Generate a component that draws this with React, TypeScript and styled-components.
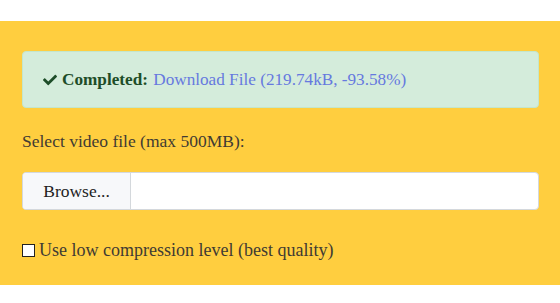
import React from "react";
import styled, { createGlobalStyle } from "styled-components";
import { FaCheck } from "react-icons/fa";

const Global = createGlobalStyle`
  html, body { margin: 0; padding: 0; background: #fff; }
  body { font-family: "Liberation Serif", "DejaVu Serif", serif; font-size: 17.5px; color: #3f3b33; }
  * { box-sizing: border-box; }
`;

const Header = styled.header`
  height: 21px;
  background: #ffffff;
`;

const Main = styled.main`
  background: #ffce3f;
  height: 264px;
  overflow: hidden;
  padding: 30px 21px 0 22px;
`;

const Alert = styled.div`
  background: #d4ecdb;
  border: 1px solid #c3e6cb;
  border-radius: 4px;
  padding: 16px 20px;
  line-height: 23px;
  font-size: 17.2px;
  color: #155724;
  display: flex;
  align-items: center;
  gap: 5px;
  margin-bottom: 20px;
`;

const Strong = styled.strong`
  font-weight: bold;
  color: #1d4d28;
`;

const Link = styled.a`
  color: #6679df;
  text-decoration: none;
  margin-left: 1px;
`;

const Label = styled.div`
  line-height: 26px;
  margin-bottom: 18px;
`;

const InputGroup = styled.div`
  display: flex;
  height: 38px;
  border: 1px solid #d4d8dc;
  border-radius: 4px;
  background: #fff;
  overflow: hidden;
`;

const Browse = styled.div`
  width: 108px;
  background: #f7f8fa;
  border-right: 1px solid #d4d8dc;
  color: #222;
  display: flex;
  align-items: center;
  justify-content: center;
`;

const Field = styled.div`
  flex: 1;
`;

const CheckRow = styled.label`
  display: flex;
  align-items: center;
  gap: 4px;
  font-size: 18px;
  line-height: 26px;
  margin-top: 27px;
`;

const Box = styled.span`
  width: 13px;
  height: 13px;
  border: 1px solid #222;
  background: #fff;
  display: inline-block;
  flex: none;
`;

const NextLine = styled.div`
  font-size: 18px;
  line-height: 26px;
  margin-top: 16px;
  padding-left: 26px;
`;

export default function App() {
  return (
    <>
      <Global />
      <Header />
      <Main>
        <Alert>
          <FaCheck size={14} color="#1d4d28" />
          <span>
            <Strong>Completed:</Strong>
            <Link href="#"> Download File (219.74kB, -93.58%)</Link>
          </span>
        </Alert>
        <Label>Select video file (max 500MB):</Label>
        <InputGroup>
          <Browse>Browse...</Browse>
          <Field />
        </InputGroup>
        <CheckRow>
          <Box />
          Use low compression level (best quality)
        </CheckRow>
        <NextLine>Include the audio track in the output</NextLine>
      </Main>
    </>
  );
}
